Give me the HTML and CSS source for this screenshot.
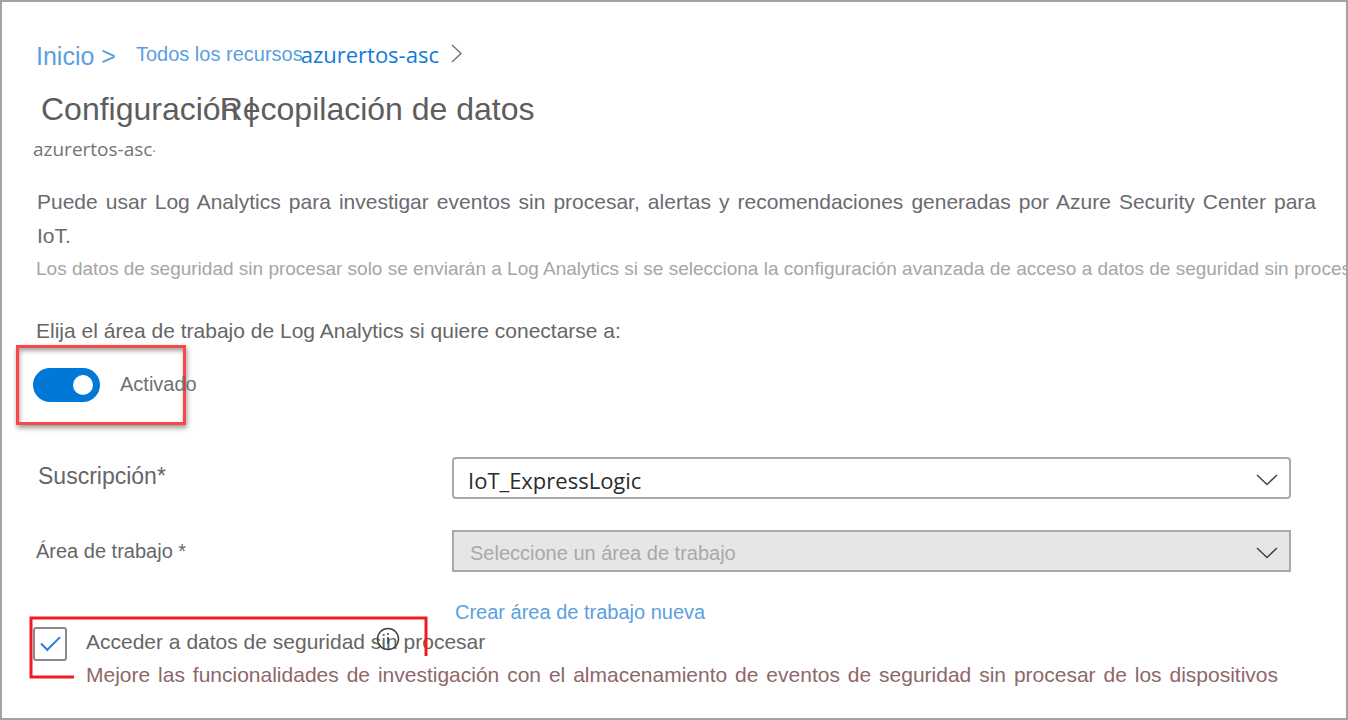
FILE: index.html
```html
<!DOCTYPE html>
<html lang="es">
<head>
<meta charset="utf-8">
<title>Configuración | Recopilación de datos</title>
<link rel="stylesheet" href="styles.css">
</head>
<body>
<main class="page">
  <nav class="crumbs" aria-label="Ruta">
    <a class="crumb-home" href="#">Inicio &gt;</a>
    <a class="crumb-all" href="#">Todos los recursos</a>
    <a class="crumb-hub" href="#">azurertos-asc</a>
    <svg class="crumb-chevron" viewBox="0 0 12 20" aria-hidden="true"><path d="M1 1l9 8.500-9 8.500"/></svg>
  </nav>
  <h1 class="title"><span>Configuración |</span><span class="title-section">Recopilación de datos</span></h1>
  <p class="subtitle">azurertos-asc<span class="dot">·</span></p>

  <p class="intro">Puede usar Log Analytics para investigar eventos sin procesar, alertas y recomendaciones generadas por Azure Security Center para IoT.</p>
  <p class="note">Los datos de seguridad sin procesar solo se enviarán a Log Analytics si se selecciona la configuración avanzada de acceso a datos de seguridad sin procesar</p>

  <p class="prompt">Elija el área de trabajo de Log Analytics si quiere conectarse a:</p>
  <div class="toggle-frame">
    <input class="toggle" type="checkbox" role="switch" id="connect" checked>
    <label class="toggle-label" for="connect">Activado</label>
  </div>

  <div class="form">
    <label class="label-large" for="subscription">Suscripción*</label>
    <div class="field">
      <select class="select" id="subscription"><option>IoT_ExpressLogic</option></select>
      <svg class="chevron" viewBox="0 0 22 12" aria-hidden="true"><path d="M1 1l10 9.500L21 1"/></svg>
    </div>
    <label class="label" for="workspace">Área de trabajo *</label>
    <div class="field">
      <select class="select select-off" id="workspace" disabled><option>Seleccione un área de trabajo</option></select>
      <svg class="chevron" viewBox="0 0 22 12" aria-hidden="true"><path d="M1 1l10 9.500L21 1"/></svg>
    </div>
  </div>
  <a class="create" href="#">Crear área de trabajo nueva</a>

  <div class="raw">
    <svg class="raw-frame" viewBox="0 0 400 64" aria-hidden="true"><path d="M45 61H2V2H397V40"/></svg>
    <input class="check" type="checkbox" id="raw" checked>
    <div class="raw-text">
      <label class="raw-label" for="raw">Acceder a datos de seguridad sin procesar</label>
      <p class="raw-help">Mejore las funcionalidades de investigación con el almacenamiento de eventos de seguridad sin procesar de los dispositivos</p>
    </div>
    <svg class="info" viewBox="0 0 24 24" aria-hidden="true"><circle cx="12" cy="12" r="10.500"/><path d="M12 10v7M12 6v2"/></svg>
  </div>
</main>
</body>
</html>
```
FILE: styles.css
```css
* { box-sizing: border-box; }

body {
  margin: 0;
  background: #fff;
  color: #666;
  font: 20px/34px "Liberation Sans", Arial, sans-serif;
}

.page {
  min-height: 100vh;
  padding: 35px 0 24px 34px;
  border: 2px solid #a3a3a3;
  overflow: hidden;
}

p, h1 { margin: 0; }
a { color: #5b9fdf; text-decoration: none; }

.crumbs { display: flex; align-items: center; height: 34px; }
.crumb-home { margin-right: 20px; padding-top: 4px; font-size: 25px; }
.crumb-hub { margin-left: -2px; color: #0f7bd7; font-family: "Open Sans", sans-serif; font-size: 22px; }
.crumb-chevron { width: 12px; height: 20px; margin-left: 12px; fill: none; stroke: #777; stroke-width: 1.5; }

.title {
  display: flex;
  padding: 18px 0 0 5px;
  color: #5e5c5c;
  font-size: 32px;
  font-weight: 400;
  line-height: 40px;
}
.title-section { margin-left: -36px; }

.subtitle { margin: 7px 0 0 -3px; color: #737373; font: 19px/26px "Open Sans", sans-serif; }
.dot { font-size: 12px; }

.intro {
  margin: 20px 30px 0 0;
  padding-left: 1px;
  color: #6b6a70;
  font-size: 21px;
  text-align: justify;
}
.note { color: #a6a6a6; font-size: 19px; line-height: 32px; white-space: nowrap; }
.prompt { margin-top: 29px; font-size: 21px; }

.toggle-frame {
  display: flex;
  align-items: center;
  gap: 20px;
  width: 170px;
  height: 80px;
  margin: -3px 0 0 -20px;
  padding-left: 14px;
  border: 3px solid #f94646;
  box-shadow: 1px 3px 5px rgb(0 0 0 / 40%), inset 1px 3px 4px rgb(0 0 0 / 35%);
  white-space: nowrap;
}
.toggle {
  flex: none;
  display: flex;
  align-items: center;
  justify-content: flex-end;
  width: 67px;
  height: 34px;
  margin: 0;
  padding-right: 7px;
  appearance: none;
  border-radius: 17px;
  background: #0078d7;
}
.toggle::before { content: ""; width: 20px; height: 20px; border-radius: 50%; background: #fff; }
.toggle-label { padding-bottom: 2px; color: #717074; }

.form {
  display: grid;
  grid-template-columns: 416px 1fr;
  row-gap: 31px;
  align-items: center;
  margin: 32px 55px 0 0;
}
.label-large { padding: 0 0 4px 2px; font-size: 23px; }
.field { display: grid; align-items: center; }
.select {
  grid-area: 1 / 1;
  width: 100%;
  height: 42px;
  padding: 4px 14px 0;
  appearance: none;
  border: 2px solid #a9a9a9;
  border-radius: 4px;
  background: #fff;
  color: #2b2b2b;
  font: 22px/32px "Open Sans", sans-serif;
}
.select-off {
  padding-left: 16px;
  border-radius: 0;
  background: #e6e6e6;
  color: #a9a9a9;
  font: 20px/32px "Liberation Sans", Arial, sans-serif;
  opacity: 1;
}
.chevron {
  grid-area: 1 / 1;
  justify-self: end;
  width: 22px;
  height: 12px;
  margin: 4px 13px 0 0;
  fill: none;
  stroke: #444;
  stroke-width: 1.5;
  pointer-events: none;
}

.create { display: block; width: max-content; margin: 23px 0 0 419px; }

.raw {
  position: relative;
  display: flex;
  gap: 19px;
  margin: -4px 68px 0 -3px;
}
.raw-frame {
  position: absolute;
  top: -9px;
  left: -4px;
  width: 400px;
  height: 64px;
  fill: none;
  stroke: #ed1c24;
  stroke-width: 3;
  pointer-events: none;
}
.check {
  flex: none;
  display: grid;
  place-items: center;
  width: 34px;
  height: 34px;
  margin: 2px 0 0;
  appearance: none;
  border: 2px solid #8a8a8a;
  border-radius: 3px;
}
.check::before {
  content: "";
  width: 17px;
  height: 8px;
  border: solid #2b7de0;
  border-width: 0 0 2px 2px;
  transform: translateY(-3px) rotate(-45deg);
}
.raw-text { flex: 1; font-size: 21px; line-height: 33px; }
.raw-label { display: block; width: max-content; }
.raw-help { color: #8e6769; text-align: justify; text-align-last: justify; }
.info {
  position: absolute;
  top: 2px;
  left: 343px;
  width: 24px;
  height: 24px;
  fill: none;
  stroke: #444;
  stroke-width: 1.5;
  pointer-events: none;
}
```
